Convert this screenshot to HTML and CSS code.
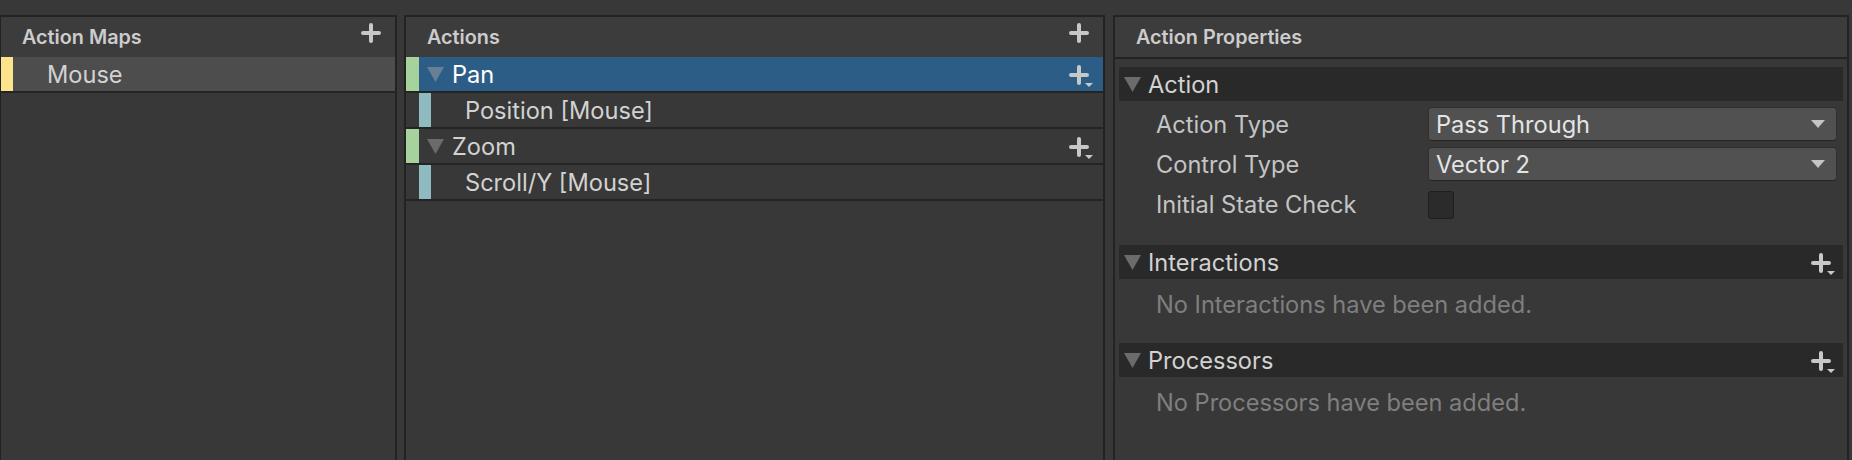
FILE: index.html
```html
<!DOCTYPE html>
<html lang="en">
<head>
<meta charset="utf-8">
<title>Input Actions</title>
<link rel="stylesheet" href="styles.css">
</head>
<body>
<div class="window">
  <section class="panel panel-maps">
    <header class="panel-head">
      <span class="panel-title">Action Maps</span>
      <svg class="icon-plus" width="20" height="20" viewBox="0 0 20 20"><path d="M10 2V18M2 10H18"/></svg>
    </header>
    <div class="tree">
      <div class="row row-dim">
        <span class="bar bar-yellow"></span>
        <span class="row-label">Mouse</span>
      </div>
    </div>
  </section>

  <section class="panel panel-actions">
    <header class="panel-head">
      <span class="panel-title">Actions</span>
      <svg class="icon-plus" width="20" height="20" viewBox="0 0 20 20"><path d="M10 2V18M2 10H18"/></svg>
    </header>
    <div class="tree">
      <div class="row row-selected">
        <span class="bar bar-green"></span>
        <svg class="arrow" width="17" height="15" viewBox="0 0 17 15"><polygon points="0,0 17,0 8.5,15"/></svg>
        <span class="row-label">Pan</span>
        <svg class="icon-plusdrop" width="24" height="22" viewBox="0 0 24 22"><path d="M10 2V18M2 10H18"/><polygon points="16,18 24,18 20,22"/></svg>
      </div>
      <div class="row row-binding">
        <span class="bar bar-teal"></span>
        <span class="row-label">Position [Mouse]</span>
      </div>
      <div class="row">
        <span class="bar bar-green"></span>
        <svg class="arrow" width="17" height="15" viewBox="0 0 17 15"><polygon points="0,0 17,0 8.5,15"/></svg>
        <span class="row-label">Zoom</span>
        <svg class="icon-plusdrop" width="24" height="22" viewBox="0 0 24 22"><path d="M10 2V18M2 10H18"/><polygon points="16,18 24,18 20,22"/></svg>
      </div>
      <div class="row row-binding">
        <span class="bar bar-teal"></span>
        <span class="row-label">Scroll/Y [Mouse]</span>
      </div>
    </div>
  </section>

  <section class="panel panel-props">
    <header class="panel-head panel-head-ruled">
      <span class="panel-title">Action Properties</span>
    </header>
    <div class="props-body">
      <div class="foldout foldout-action">
        <div class="foldout-head">
          <svg class="arrow" width="17" height="15" viewBox="0 0 17 15"><polygon points="0,0 17,0 8.5,15"/></svg>
          <span class="foldout-title">Action</span>
        </div>
        <div class="prop-rows">
          <div class="prop-row">
            <span class="prop-label">Action Type</span>
            <div class="dropdown">
              <span class="dropdown-value">Pass Through</span>
              <svg class="dropdown-arrow" width="14" height="8" viewBox="0 0 14 8"><polygon points="0,0 14,0 7,8"/></svg>
            </div>
          </div>
          <div class="prop-row">
            <span class="prop-label">Control Type</span>
            <div class="dropdown">
              <span class="dropdown-value">Vector 2</span>
              <svg class="dropdown-arrow" width="14" height="8" viewBox="0 0 14 8"><polygon points="0,0 14,0 7,8"/></svg>
            </div>
          </div>
          <div class="prop-row">
            <span class="prop-label">Initial State Check</span>
            <span class="checkbox"></span>
          </div>
        </div>
      </div>

      <div class="foldout">
        <div class="foldout-head">
          <svg class="arrow" width="17" height="15" viewBox="0 0 17 15"><polygon points="0,0 17,0 8.5,15"/></svg>
          <span class="foldout-title">Interactions</span>
          <svg class="icon-plusdrop" width="24" height="22" viewBox="0 0 24 22"><path d="M10 2V18M2 10H18"/><polygon points="16,18 24,18 20,22"/></svg>
        </div>
        <div class="empty-note">No Interactions have been added.</div>
      </div>

      <div class="foldout">
        <div class="foldout-head">
          <svg class="arrow" width="17" height="15" viewBox="0 0 17 15"><polygon points="0,0 17,0 8.5,15"/></svg>
          <span class="foldout-title">Processors</span>
          <svg class="icon-plusdrop" width="24" height="22" viewBox="0 0 24 22"><path d="M10 2V18M2 10H18"/><polygon points="16,18 24,18 20,22"/></svg>
        </div>
        <div class="empty-note">No Processors have been added.</div>
      </div>
    </div>
  </section>
</div>
</body>
</html>
```

FILE: styles.css
```css
* {
  box-sizing: border-box;
}

html, body {
  margin: 0;
  padding: 0;
  background: #383838;
}

body {
  font-family: "Inter", "Noto Sans", sans-serif;
  font-size: 23.6px;
  color: #d2d2d2;
  overflow: hidden;
}

.window {
  display: flex;
  align-items: flex-start;
  height: 460px;
  padding-top: 15px;
  overflow: hidden;
}

.panel {
  height: 470px;
  border: 2px solid #232323;
  background: #383838;
  display: flex;
  flex-direction: column;
  flex: none;
}

.panel-maps {
  width: 398px;
  margin-left: -1px;
}

.panel-actions {
  width: 701px;
  margin-left: 7px;
}

.panel-props {
  width: 736px;
  margin-left: 8px;
}

.panel-head {
  height: 40px;
  flex: none;
  display: flex;
  align-items: center;
  justify-content: space-between;
  padding: 0 14px 0 21px;
  background: #3c3c3c;
}

.panel-head-ruled {
  height: 42px;
  border-bottom: 2px solid #232323;
}

.panel-title {
  font-size: 19.8px;
  font-weight: 600;
  color: #cccccc;
}

.icon-plus path,
.icon-plusdrop path {
  stroke: #c8c8c8;
  stroke-width: 4;
  stroke-linecap: round;
  fill: none;
}

.icon-plusdrop polygon {
  fill: #c8c8c8;
}

.icon-plus {
  display: block;
  margin-top: -8px;
}

/* tree rows */
.tree {
  display: flex;
  flex-direction: column;
}

.row {
  height: 36px;
  display: flex;
  align-items: center;
  border-bottom: 2px solid #242424;
  padding-right: 10px;
}

.row-dim {
  background: #4d4d4d;
}

.row-selected {
  background: #2c5d87;
}

.row-selected .row-label {
  color: #ffffff;
}

.bar {
  align-self: stretch;
  flex: none;
  width: 12px;
}

.bar-yellow {
  background: #fee38d;
  margin-right: 34px;
}

.bar-green {
  width: 13px;
  background: #a6d39b;
}

.bar-teal {
  margin-left: 13px;
  margin-right: 34px;
  background: #8fbac0;
}

.arrow {
  flex: none;
  display: block;
}

.arrow polygon {
  fill: rgba(170, 170, 170, 0.45);
}

.row .arrow {
  margin-left: 8px;
  margin-right: 8px;
}

.row-label {
  flex: 1;
  white-space: nowrap;
  padding-top: 1px;
}

.icon-plusdrop {
  flex: none;
  display: block;
  margin-top: 4px;
}

/* properties */
.props-body {
  padding: 8px 4px 0 4px;
  display: flex;
  flex-direction: column;
}

.foldout {
  display: flex;
  flex-direction: column;
}

.foldout-head {
  height: 34px;
  display: flex;
  align-items: center;
  background: #292929;
  padding: 0 8px 0 5px;
}

.foldout-head .arrow {
  margin-right: 7px;
}

.foldout-head .arrow polygon {
  fill: #6b6b6b;
}

.foldout-title {
  flex: 1;
  color: #d2d2d2;
}

.prop-rows {
  padding: 3px 6px 21px 37px;
  display: flex;
  flex-direction: column;
}

.prop-row {
  height: 40px;
  display: flex;
  align-items: center;
}

.prop-label {
  width: 272px;
  flex: none;
  color: #c4c4c4;
}

.dropdown {
  flex: 1;
  height: 34px;
  display: flex;
  align-items: center;
  justify-content: space-between;
  padding: 0 11px 0 7px;
  background: #515151;
  border: 1px solid #303030;
  border-bottom-color: #242424;
  border-radius: 4px;
}

.dropdown-value {
  color: #e4e4e4;
}

.dropdown-arrow polygon {
  fill: #c4c4c4;
}

.checkbox {
  width: 26px;
  height: 28px;
  margin-top: 1px;
  background: #2b2b2b;
  border: 1px solid #1e1e1e;
  border-radius: 3px;
}

.empty-note {
  height: 40px;
  margin-top: 5px;
  margin-bottom: 19px;
  padding-left: 37px;
  display: flex;
  align-items: center;
  color: #7f7f7f;
  white-space: nowrap;
}
```
